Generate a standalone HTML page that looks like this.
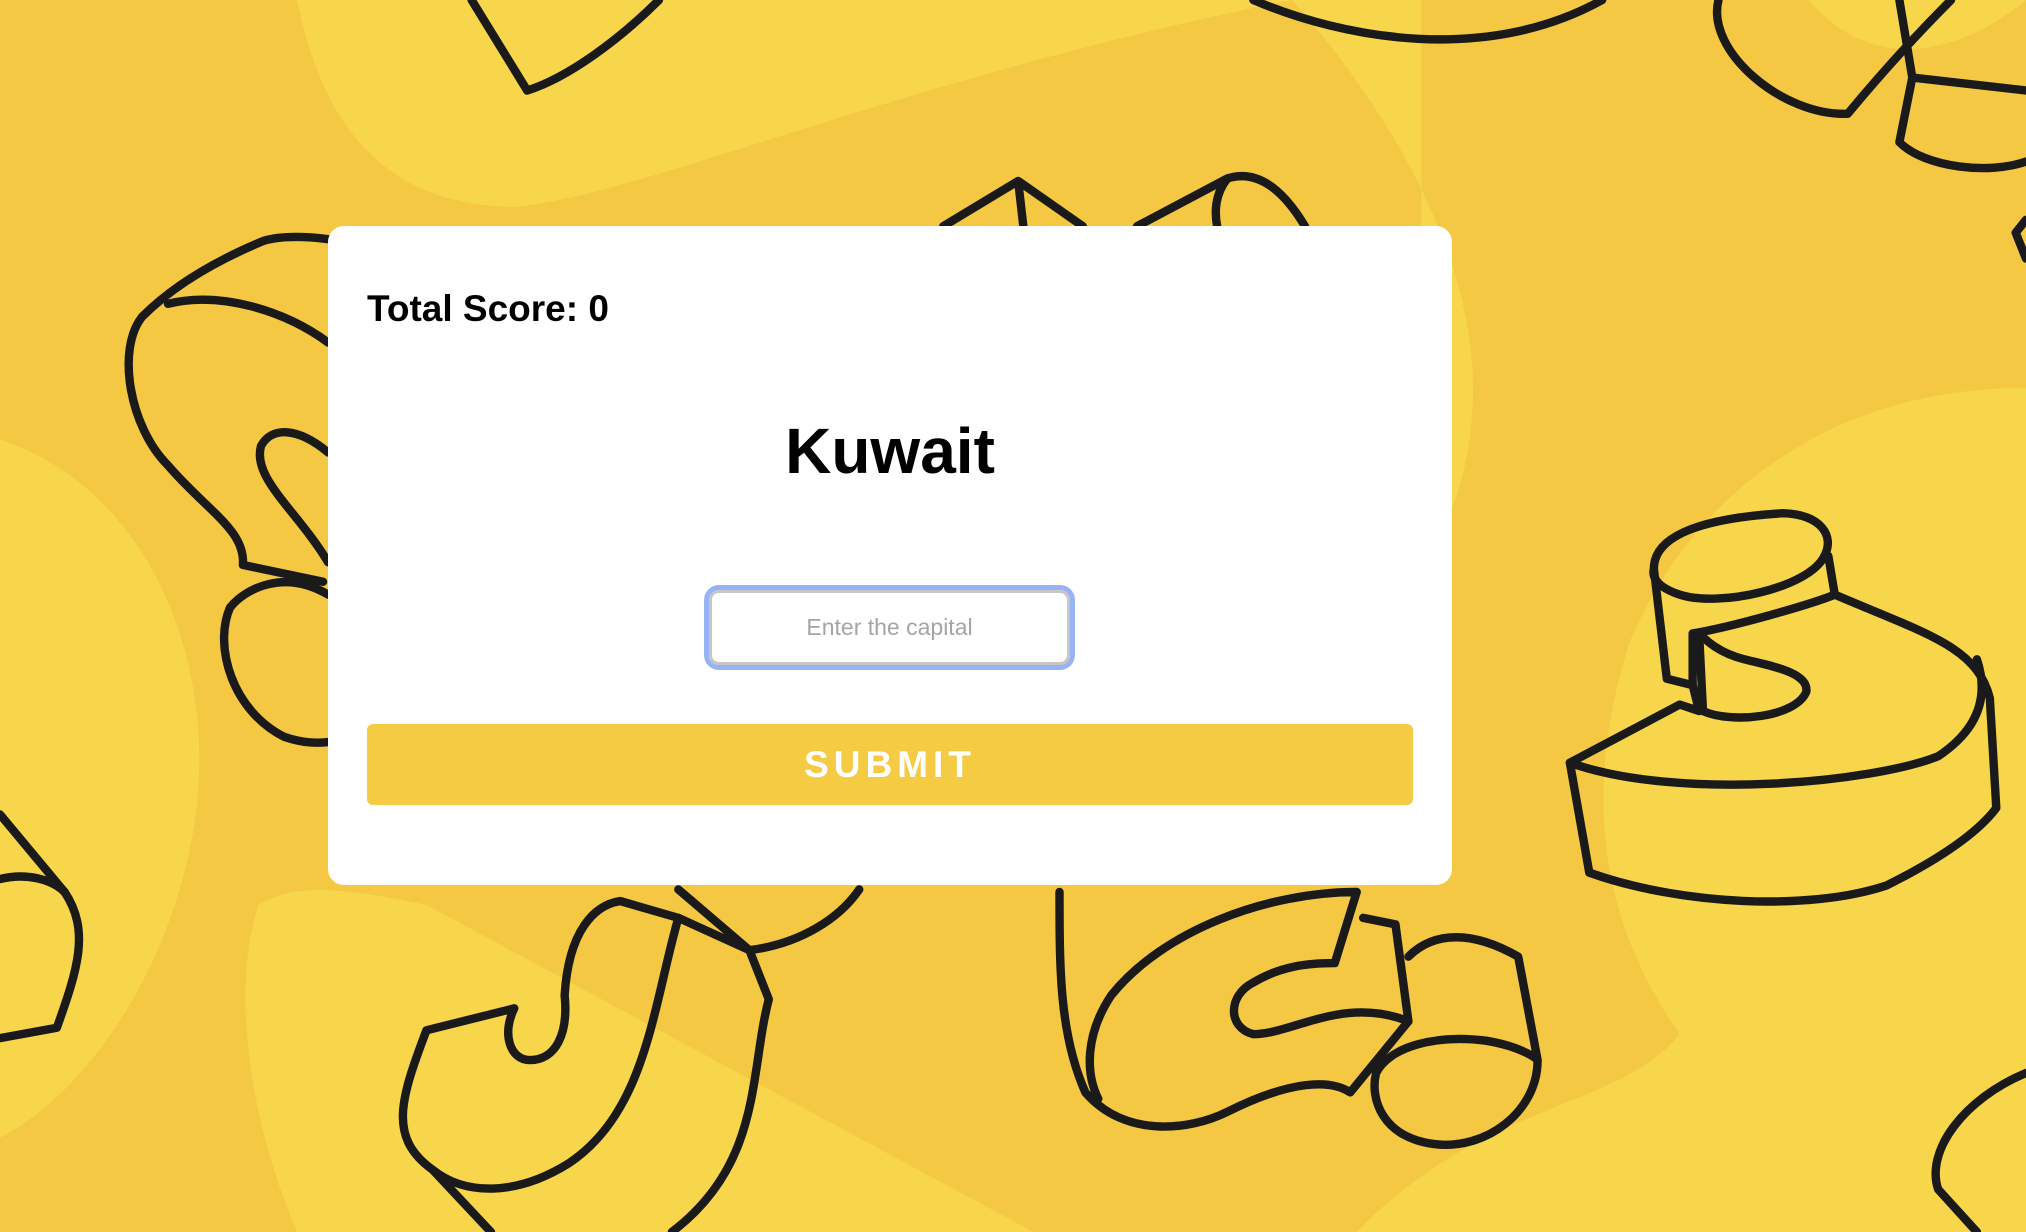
<!DOCTYPE html>
<html><head><style>
html,body{margin:0;padding:0;width:2026px;height:1232px;overflow:hidden;background:#f4c842;font-family:"Liberation Sans",sans-serif}
svg.bg{position:absolute;left:0;top:0;width:2026px;height:1232px}
.card{position:absolute;left:328px;top:226px;width:1124px;height:659px;background:#fff;border-radius:16px}
.score{position:absolute;left:39px;top:62px;font-size:37px;font-weight:bold;color:#000}
.country{position:absolute;left:0;width:100%;top:188px;text-align:center;font-size:64px;font-weight:bold;color:#000}
.inp{position:absolute;left:381px;top:364px;width:355px;height:69px;border:3px solid #c6c6c6;border-radius:10px;box-shadow:0 0 0 5px #97b3f3;text-align:center;line-height:69px;font-size:23px;color:#a5a5a5}
.btn{position:absolute;left:39px;top:498px;width:1046px;height:81px;background:#f5cb44;border-radius:6px;color:#fff;text-align:center;line-height:81px;font-size:37px;font-weight:bold;letter-spacing:5px}
</style></head><body>
<svg class="bg" viewBox="0 0 1568 953" preserveAspectRatio="none">
<g fill="#f7d64c">
<path d="M230 0 C250 100 300 160 400 160 C500 150 700 60 1000 0Z"/>
<path d="M1000 0 C1080 90 1140 200 1140 300 C1140 380 1110 420 1100 450 L1100 0Z"/>
<path d="M0 340 C120 380 170 520 150 640 C130 760 60 850 0 880Z"/>
<path d="M1568 300 C1400 300 1300 400 1260 500 C1230 600 1230 700 1300 800 C1250 860 1150 850 1050 953 L1568 953Z"/>
<path d="M200 700 C230 680 280 690 330 700 L800 953 L230 953 C190 860 180 760 200 700Z"/>
<path d="M1400 0 C1450 60 1520 40 1568 0Z"/>
</g>
<g fill="none" stroke="#1a1a1a" stroke-width="6.5" stroke-linejoin="round" stroke-linecap="round">
<path d="M365 0 L408 70 C440 60 480 30 510 0"/>
<path d="M970 0 C1040 30 1150 50 1240 0"/>
<path d="M1330 0 C1320 40 1380 90 1430 88 C1470 40 1500 10 1510 0"/>
<path d="M1470 0 L1480 60 L1568 70 M1480 60 L1470 110 C1490 130 1540 135 1568 125"/>
<path d="M1568 170 L1560 180 L1568 200"/>
<path d="M730 175 L788 140 L838 175 M788 140 L792 175 M880 175 L950 138 C975 130 995 150 1010 175 M950 138 C940 150 940 165 942 175"/>
<path d="M254 185 C230 182 210 183 200 188 C160 205 130 225 110 245 C90 270 100 330 130 360 C160 395 190 410 188 437 L250 450"/>
<path d="M254 265 C220 240 170 225 130 235"/>
<path d="M254 350 C230 330 210 330 202 345 C195 370 230 395 254 435"/>
<path d="M254 460 C220 440 190 455 178 470 C165 500 180 550 220 570 C235 575 245 575 254 574"/>
<path d="M0 630 L50 690 C70 720 60 750 44 795 L0 803"/>
<path d="M0 680 C20 675 40 680 50 690"/>
<path d="M330 797 C310 850 300 880 335 905 L380 953 M330 797 L398 780 C388 800 395 820 410 820 C430 820 440 800 437 770 C440 720 460 700 480 697 L525 710 C505 780 500 860 440 900 C400 925 360 925 335 905"/>
<path d="M525 688 L580 735 L525 710 M580 735 C620 730 650 710 665 688 M580 735 L595 773 C580 830 590 900 520 953"/>
<path d="M820 690 C820 750 820 800 840 845 C870 880 920 875 950 860 C1000 835 1030 835 1045 845 L1090 790 C1040 770 1000 800 970 800 C950 795 950 770 970 760 C990 748 1010 745 1033 745 L1050 690 M1050 690 C980 690 900 720 860 770 C840 800 840 830 850 850"/>
<path d="M1055 710 L1080 715 L1090 790 M1090 740 C1110 720 1140 720 1175 740 L1190 820 C1190 860 1150 890 1110 885 C1070 880 1060 850 1065 830 C1075 810 1110 800 1150 805 C1180 810 1190 820 1190 820"/>
<path d="M1280 440 C1280 410 1330 400 1380 397 C1410 398 1420 415 1412 430 C1400 455 1330 470 1300 460 C1285 455 1278 448 1280 440 L1290 525 L1310 530 L1315 550 L1300 545 L1215 590 L1230 675 C1300 700 1400 705 1460 685 C1500 665 1530 645 1545 625 L1540 540 C1530 500 1490 490 1420 460 L1415 430"/>
<path d="M1215 590 C1300 620 1450 605 1500 585 C1530 565 1540 540 1530 510 M1310 490 L1310 530 M1310 490 C1340 485 1400 468 1420 460 M1315 490 L1318 550 C1340 560 1390 555 1398 535 C1400 520 1370 515 1350 510 C1330 505 1320 495 1315 490"/>
<path d="M1568 830 C1520 850 1490 890 1500 920 L1530 953"/>
</g>
</svg>
<div class="card">
<div class="score">Total Score: 0</div>
<div class="country">Kuwait</div>
<div class="inp">Enter the capital</div>
<div class="btn">SUBMIT</div>
</div>
</body></html>
